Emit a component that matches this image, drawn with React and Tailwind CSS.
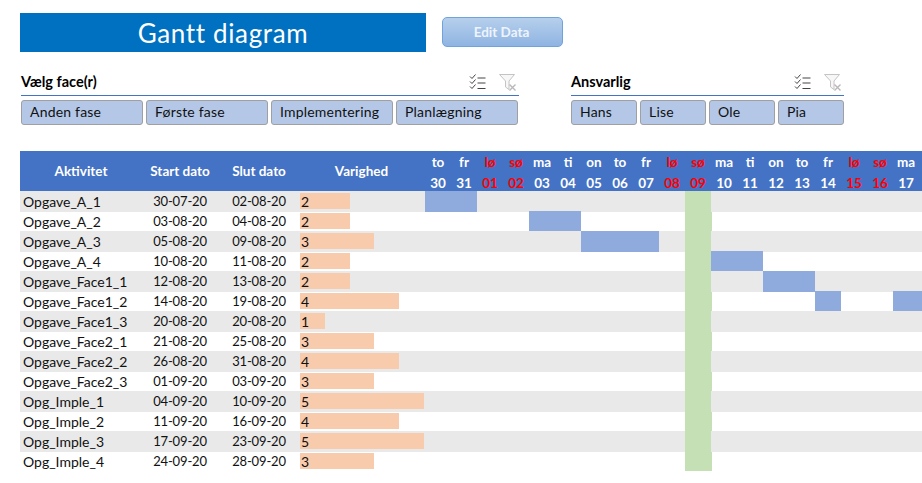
const days = [["to","30"],["fr","31"],["lø","01"],["sø","02"],["ma","03"],["ti","04"],["on","05"],["to","06"],["fr","07"],["lø","08"],["sø","09"],["ma","10"],["ti","11"],["on","12"],["to","13"],["fr","14"],["lø","15"],["sø","16"],["ma","17"]];
const rows = [
  ["Opgave_A_1","30-07-20","02-08-20",2,[0,1]],
  ["Opgave_A_2","03-08-20","04-08-20",2,[4,5]],
  ["Opgave_A_3","05-08-20","09-08-20",3,[6,7,8]],
  ["Opgave_A_4","10-08-20","11-08-20",2,[11,12]],
  ["Opgave_Face1_1","12-08-20","13-08-20",2,[13,14]],
  ["Opgave_Face1_2","14-08-20","19-08-20",4,[15,18,19]],
  ["Opgave_Face1_3","20-08-20","20-08-20",1,[]],
  ["Opgave_Face2_1","21-08-20","25-08-20",3,[]],
  ["Opgave_Face2_2","26-08-20","31-08-20",4,[]],
  ["Opgave_Face2_3","01-09-20","03-09-20",3,[]],
  ["Opg_Imple_1","04-09-20","10-09-20",5,[]],
  ["Opg_Imple_2","11-09-20","16-09-20",4,[]],
  ["Opg_Imple_3","17-09-20","23-09-20",5,[]],
  ["Opg_Imple_4","24-09-20","28-09-20",3,[]],
];
const barW = {1:25,2:50,3:74,4:99,5:124};
const cols = Array.from({ length: 20 }, (_, i) => i);

function ChecklistIcon() {
  return (
    <svg width="17" height="17" viewBox="0 0 17 17" fill="none" stroke="#444" strokeWidth="1">
      <path d="M1 2.5l2 2 3.5-4M1 7.5l2 2 3.5-4M1 12.5l2 2 3.5-4" />
      <path d="M8.5 4h8M8.5 9h8M8.5 14.5h8" />
    </svg>
  );
}
function FilterIcon() {
  return (
    <svg width="18" height="17" viewBox="0 0 18 17" fill="none">
      <path d="M0.5 0.5H15.5L10 7V15.5L6.5 13V7Z" stroke="#c4c4c4" strokeWidth="1" fill="#f7f7f7" />
      <path d="M10.5 10.5l6 6M16.5 10.5l-6 6" stroke="#b8b8b8" strokeWidth="1.4" />
    </svg>
  );
}
function Slicer({ title, items, widthClass, btnClass }) {
  return (
    <div className={widthClass}>
      <div className="flex h-[22px] items-end border-b border-[#4472c4] pb-[4px]">
        <span className="text-[14.5px] font-bold leading-[18px] text-black">{title}</span>
        <span className="ml-auto flex items-center gap-[13px] pr-[2px]"><ChecklistIcon /><FilterIcon /></span>
      </div>
      <div className="mt-[4px] flex gap-[3px]">
        {items.map((t) => (
          <div key={t} className={`${btnClass} flex h-[25px] items-center rounded-[3px] border border-[#a0a0a0] bg-[#b4c7e7] pb-[2px] pl-[8px] text-[14px] tracking-[0.2px] text-[#111]`}>{t}</div>
        ))}
      </div>
    </div>
  );
}

export default function App() {
  return (
    <div className="h-[483px] w-[922px] overflow-hidden bg-white font-['Lato','Liberation_Sans',sans-serif]">
      <div className="ml-[20px] flex items-start pt-[13px]">
        <div className="flex h-[39px] w-[406px] items-center justify-center bg-[#0070c0] pt-[2px] text-[26px] tracking-[0.65px] text-white">Gantt diagram</div>
        <div className="ml-[16px] mt-[4px] flex h-[30px] w-[121px] items-center justify-center rounded-[5px] border border-[#6fa3dc] bg-gradient-to-b from-[#b6cfec] to-[#8fb4e2] pr-[2px] text-[13.5px] font-bold text-[#eef4fc]">Edit Data</div>
      </div>
      <div className="ml-[21px] mt-[22px] flex gap-[52px]">
        <Slicer title="Vælg face(r)" items={["Anden fase","Første fase","Implementering","Planlægning"]} widthClass="w-[498px]" btnClass="w-[122px]" />
        <Slicer title="Ansvarlig" items={["Hans","Lise","Ole","Pia"]} widthClass="w-[273px]" btnClass="w-[66px]" />
      </div>
      <div className="ml-[20px] mt-[26px]">
        <div className="flex h-[40px] w-[902px] items-stretch overflow-hidden bg-[#4472c4] text-[13.5px] font-bold text-white">
          <div className="flex w-[122px] shrink-0 items-center justify-center">Aktivitet</div>
          <div className="flex w-[76px] shrink-0 items-center justify-center">Start dato</div>
          <div className="flex w-[82px] shrink-0 items-center justify-center">Slut dato</div>
          <div className="flex w-[125px] shrink-0 items-center justify-center pr-[2px]">Varighed</div>
          {days.map(([d, n], i) => {
            const we = d === "lø" || d === "sø";
            return (
              <div key={i} className={`flex w-[26px] shrink-0 flex-col items-center pt-[1px] leading-[20px] ${we ? "text-[#ff0000]" : "text-white"}`}>
                <span>{d}</span><span className="mt-px">{n}</span>
              </div>
            );
          })}
        </div>
        {rows.map((r, i) => {
          const gray = i % 2 === 0;
          return (
            <div key={r[0]} className={`flex w-[902px] items-start text-[14px] text-[#111] ${gray ? "h-[21px] bg-[#e9e9e9]" : "h-[19px] bg-white"}`}>
              <div className="flex h-full w-[122px] shrink-0 items-center pl-[3px]">{r[0]}</div>
              <div className="flex h-full w-[76px] shrink-0 items-center justify-center text-[13px] tracking-[-0.15px]">{r[1]}</div>
              <div className="flex h-full w-[82px] shrink-0 items-center justify-center text-[13px] tracking-[-0.15px]">{r[2]}</div>
              <div className="h-full w-[125px] shrink-0 pt-[2px]">
                <div className={`flex h-[16px] items-center bg-[#f8cbad] pl-[1px] ${gray ? "" : "-mt-px"}`} style={{ width: barW[r[3]] }}>{r[3]}</div>
              </div>
              {cols.map((c) => {
                const on = r[4].includes(c);
                const green = c === 10;
                return (
                  <div key={c} className={`w-[26px] shrink-0 ${green ? "bg-[#c5e0b4]" : on ? "bg-[#8faadc]" : ""} ${gray ? "h-full" : on ? "-mt-px h-[20px]" : "h-full"} ${green && !gray ? "-mr-px w-[27px]" : ""}`} />
                );
              })}
            </div>
          );
        })}
      </div>
    </div>
  );
}
